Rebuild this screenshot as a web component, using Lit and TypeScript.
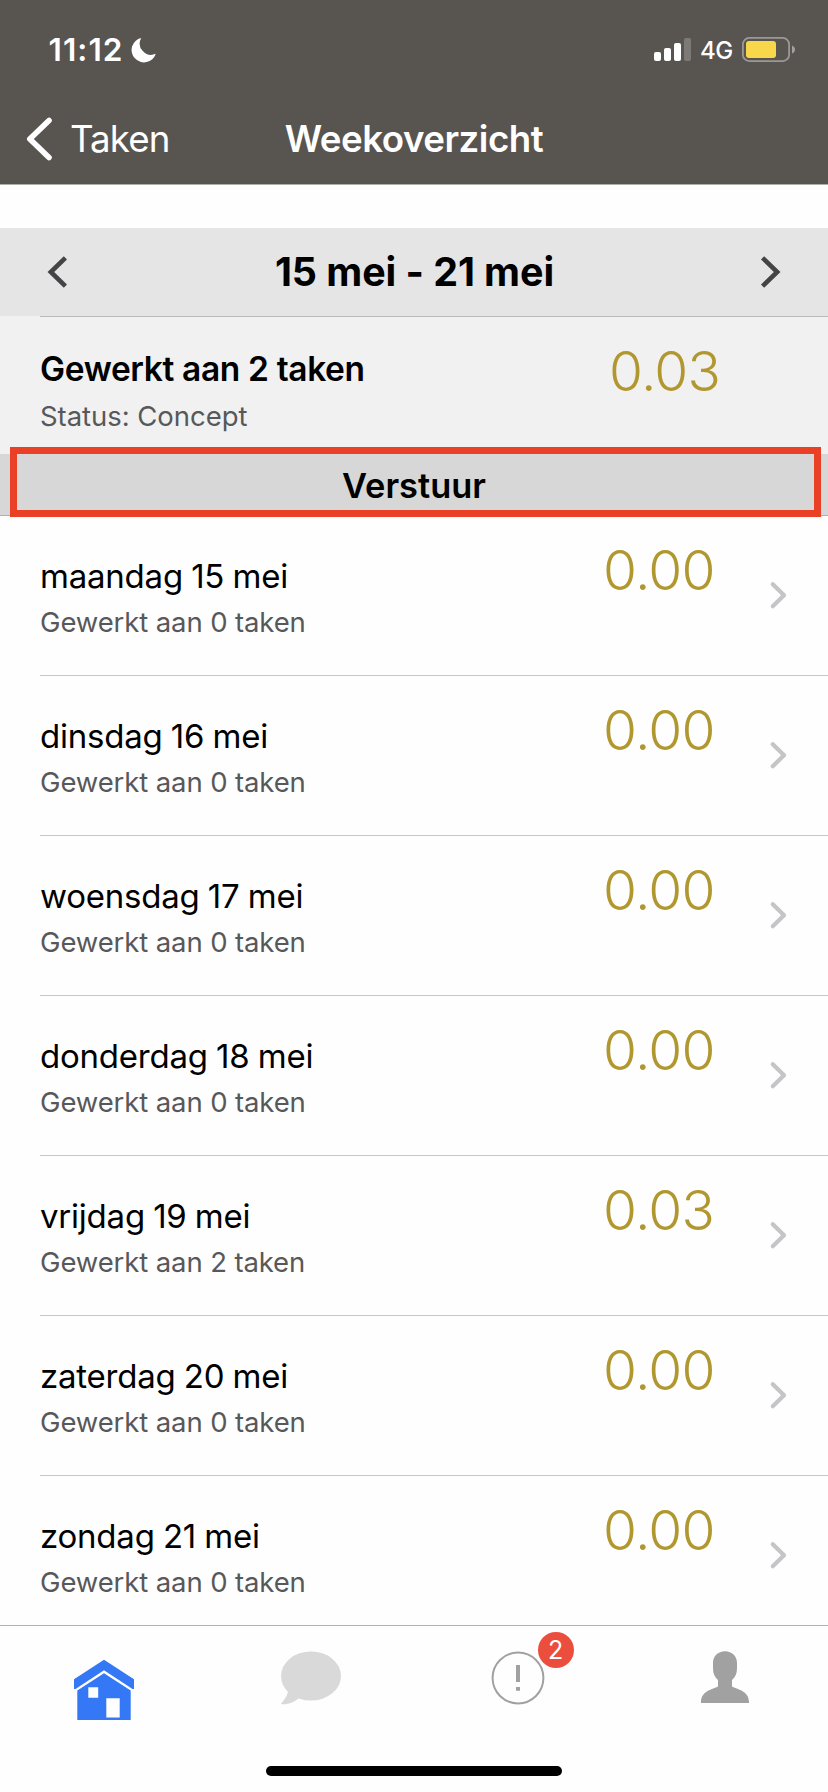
import { LitElement, html, css, svg } from "lit";
import { customElement, property, state } from "lit/decorators.js";

interface Day {
  label: string;
  tasks: number;
  hours: string;
}

@customElement("day-row")
class DayRow extends LitElement {
  @property({ attribute: false }) day!: Day;

  static styles = css`
    :host {
      display: flex;
      height: 160px;
      box-sizing: border-box;
      margin-left: 40px;
      border-bottom: 1px solid #c7c7c9;
      align-items: center;
    }
    .text {
      flex: 1;
      align-self: flex-start;
      padding-top: 40px;
    }
    .name {
      font-size: 33px;
      line-height: 40px;
      letter-spacing: -0.22px;
      word-spacing: -0.8px;
      color: #000;
    }
    .sub {
      margin-top: 6px;
      font-size: 27.5px;
      line-height: 40px;
      letter-spacing: -0.12px;
      color: #58585a;
    }
    .hours {
      align-self: flex-start;
      padding-top: 24px;
      width: 112px;
      font-size: 55px;
      line-height: 60px;
      font-weight: 300;
      letter-spacing: -0.7px;
      color: #b1972f;
    }
    .chevron {
      display: block;
      margin: 0 41px 1px 54px;
    }
  `;

  render() {
    return html`
      <div class="text">
        <div class="name">${this.day.label}</div>
        <div class="sub">Gewerkt aan ${this.day.tasks} taken</div>
      </div>
      <div class="hours">${this.day.hours}</div>
      <svg class="chevron" width="18" height="30" viewBox="0 0 18 30">
        <path d="M3.8 4.2 15 15.2 3.8 26.2" fill="none" stroke="#c5c5c7" stroke-width="4.2" stroke-linecap="round" stroke-linejoin="round" />
      </svg>
    `;
  }
}

@customElement("app-root")
class AppRoot extends LitElement {
  @state() private days: Day[] = [
    { label: "maandag 15 mei", tasks: 0, hours: "0.00" },
    { label: "dinsdag 16 mei", tasks: 0, hours: "0.00" },
    { label: "woensdag 17 mei", tasks: 0, hours: "0.00" },
    { label: "donderdag 18 mei", tasks: 0, hours: "0.00" },
    { label: "vrijdag 19 mei", tasks: 2, hours: "0.03" },
    { label: "zaterdag 20 mei", tasks: 0, hours: "0.00" },
    { label: "zondag 21 mei", tasks: 0, hours: "0.00" },
  ];

  static styles = css`
    :host {
      display: flex;
      flex-direction: column;
      width: 828px;
      height: 1792px;
      overflow: hidden;
      background: #fefefe;
      color: #000;
      font-family: Inter, "Liberation Sans", sans-serif;
      white-space: nowrap;
    }
    svg {
      display: block;
    }
    .top {
      flex: none;
      height: 184px;
      background: #585450;
      border-bottom: 1px solid #b0aeac;
      color: #fff;
    }
    .status {
      display: flex;
      height: 99px;
      align-items: center;
      padding: 0 32px 0 48.5px;
    }
    .clock {
      font-size: 31.6px;
      line-height: 40px;
      font-weight: 600;
      letter-spacing: 1.05px;
      width: 80px;
    }
    .signal {
      margin-left: auto;
    }
    .network {
      font-size: 24px;
      line-height: 30px;
      font-weight: 450;
      letter-spacing: -0.4px;
      width: 42px;
      padding: 2px 0 0 8px;
    }
    .nav {
      display: grid;
      grid-template-columns: 1fr auto 1fr;
      height: 80px;
      align-items: center;
    }
    .back {
      display: flex;
      align-items: center;
      padding-left: 24px;
      gap: 16px;
      font-size: 36.7px;
      line-height: 44px;
      font-weight: 400;
      letter-spacing: -0.9px;
    }
    .title {
      font-size: 36.7px;
      line-height: 44px;
      font-weight: 600;
      letter-spacing: -0.5px;
    }
    .week {
      flex: none;
      display: flex;
      align-items: center;
      justify-content: space-between;
      height: 88px;
      margin-top: 43px;
      padding: 0 43px 0 44px;
      background: #e5e5e5;
      font-size: 39.4px;
      line-height: 48px;
      font-weight: 700;
      letter-spacing: -0.05px;
    }
    .summary {
      flex: none;
      display: flex;
      height: 138px;
      box-sizing: border-box;
      background: linear-gradient(#b9b9bb, #b9b9bb) 40px 0 / 100% 1px no-repeat #f1f1f1;
      padding-left: 40px;
    }
    .summary-text {
      flex: 1;
      padding-top: 33px;
    }
    .summary-title {
      font-size: 33.5px;
      line-height: 40px;
      font-weight: 600;
      letter-spacing: -0.36px;
    }
    .summary-sub {
      margin-top: 7px;
      font-size: 27.5px;
      line-height: 40px;
      letter-spacing: -0.04px;
      color: #58585a;
    }
    .total {
      width: 219px;
      padding-top: 25px;
      font-size: 55px;
      line-height: 60px;
      font-weight: 300;
      letter-spacing: -0.7px;
      color: #b1972f;
    }
    .send {
      flex: none;
      position: relative;
      height: 62px;
      box-sizing: border-box;
      border-bottom: 1px solid #b0b0b2;
      background: #d7d7d7;
      text-align: center;
      font-size: 34.4px;
      line-height: 63px;
      font-weight: 600;
    }
    .highlight {
      position: absolute;
      left: 10px;
      right: 7.5px;
      top: -7.5px;
      height: 70.5px;
      box-sizing: border-box;
      border: 7px solid #ea4025;
    }
    .days {
      flex: 1;
      min-height: 0;
      overflow: hidden;
    }
    .tabs {
      flex: none;
      display: grid;
      grid-template-columns: repeat(4, 1fr);
      justify-items: center;
      height: 140px;
      box-sizing: border-box;
      padding-top: 24px;
      border-top: 1px solid #b1b1b3;
    }
    .tab {
      position: relative;
      width: 60px;
      height: 72px;
    }
    .badge {
      position: absolute;
      left: 50px;
      top: -18px;
      width: 36px;
      height: 36px;
      border-radius: 50%;
      background: #eb4e3d;
      color: #fff;
      text-align: center;
      font-size: 25px;
      line-height: 36px;
    }
    .home {
      flex: none;
      width: 296px;
      height: 10px;
      margin: 1px auto 16px;
      border-radius: 5px;
      background: #000;
    }
  `;

  private weekArrow(d: string) {
    return html`<svg width="40" height="40" viewBox="0 0 40 40">${svg`<path d=${d} fill="none" stroke="#444446" stroke-width="4.6" />`}</svg>`;
  }

  render() {
    return html`
      <header class="top">
        <div class="status">
          <div class="clock">11:12</div>
          <svg width="30" height="30" viewBox="0 0 30 30">
            <path d="M12.2 2.9A12.4 12.4 0 1 0 26.8 18.8A11.4 11.4 0 0 1 12.2 2.9Z" fill="#fff" />
          </svg>
          <svg class="signal" width="38" height="26" viewBox="0 0 38 26" fill="#fff">
            <rect x="0" y="15" width="7" height="9" rx="2" />
            <rect x="10" y="11" width="7" height="13" rx="2" />
            <rect x="20" y="6" width="7" height="18" rx="2" />
            <rect x="30" y="1" width="7" height="23" rx="2" opacity=".22" />
          </svg>
          <div class="network">4G</div>
          <svg width="54" height="26" viewBox="0 0 54 26">
            <rect x=".9" y=".9" width="46.2" height="23.2" rx="6.4" fill="none" stroke="#9b9896" stroke-width="1.8" />
            <rect x="4" y="4" width="30" height="17" rx="3" fill="#f8d74a" />
            <path d="M50 8.4c1.9.7 3 2.3 3 4.1s-1.1 3.4-3 4.1z" fill="#a3a09e" />
          </svg>
        </div>
        <div class="nav">
          <div class="back">
            <svg width="30" height="44" viewBox="0 0 30 44">
              <path d="M25 3.5 5.8 22 25 40.5" fill="none" stroke="#fff" stroke-width="5.6" stroke-linecap="round" stroke-linejoin="round" />
            </svg>
            <span>Taken</span>
          </div>
          <div class="title">Weekoverzicht</div>
        </div>
      </header>

      <div class="week">
        ${this.weekArrow("M21.4 5.8 6.8 20 21.4 34.2")}
        <span>15 mei - 21 mei</span>
        ${this.weekArrow("M17.6 5.8 32.2 20 17.6 34.2")}
      </div>

      <section class="summary">
        <div class="summary-text">
          <div class="summary-title">Gewerkt aan 2 taken</div>
          <div class="summary-sub">Status: Concept</div>
        </div>
        <div class="total">0.03</div>
      </section>

      <div class="send">
        Verstuur
        <div class="highlight"></div>
      </div>

      <main class="days">${this.days.map((day) => html`<day-row .day=${day}></day-row>`)}</main>

      <nav class="tabs">
        <div class="tab">
          <svg width="60" height="72" viewBox="0 0 60 72" fill="#3478f6">
            <path d="M30 9.8 60 29.3V39H58.5L30 20.3 1.5 39H0V29.3Z" />
            <path fill-rule="evenodd" d="M30 23.2 56.7 40.6V70H3.3V40.6ZM14.3 37.3V47.7H24.2V37.3ZM32.3 48.3V67.5H45.7V48.3Z" />
          </svg>
        </div>
        <div class="tab">
          <svg width="60" height="72" viewBox="0 0 60 72" fill="#d9d9d9">
            <ellipse cx="30" cy="26" rx="30" ry="24.5" />
            <path d="M7 41C6.500 45.500 3.500 50 .2 53.200 0 54 .5 54.300 2 54.300 9 54.300 14 51.500 18 48Z" />
          </svg>
        </div>
        <div class="tab">
          <svg width="60" height="72" viewBox="0 0 60 72" fill="#a1a1a1">
            <circle cx="30" cy="28" r="25.4" fill="none" stroke="#a1a1a1" stroke-width="2" />
            <path d="M28 15h4v17h-4zM28 37h4v3.7h-4z" />
          </svg>
          <div class="badge">2</div>
        </div>
        <div class="tab">
          <svg width="60" height="72" viewBox="0 0 60 72" fill="#a1a1a1">
            <path d="M30 1.300C37 1.300 42 6.300 42 13V18.500C42 23.500 40.300 27.300 37 30V36.500C42 39.500 54 40.500 54 52V53H6V52C6 40.500 18 39.500 23 36.500V30C19.700 27.300 18 23.500 18 18.500V13C18 6.300 23 1.300 30 1.300Z" />
          </svg>
        </div>
      </nav>
      <div class="home"></div>
    `;
  }
}
